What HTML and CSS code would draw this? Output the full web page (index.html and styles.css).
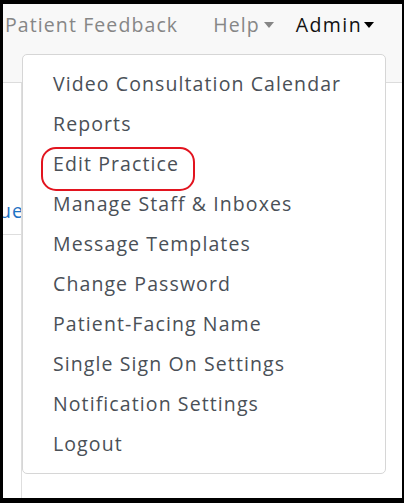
FILE: index.html
```html
<!doctype html>
<html>
<head>
<meta charset="utf-8">
<title>Admin menu</title>
<link rel="stylesheet" href="styles.css">
</head>
<body>
<div class="page">
    <div class="navbar">
        <a class="nav-link">Patient Feedback</a>
        <a class="nav-link toggle">Help</a>
        <a class="nav-link toggle active">Admin</a>
    </div>
    <div class="content">
        <div class="side">
            <div class="side-row"><span class="link">Queue</span></div>
        </div>
        <div class="main"></div>
    </div>

    <ul class="dropdown">
        <li>Video Consultation Calendar</li>
        <li>Reports</li>
        <li class="marked">Edit Practice</li>
        <li>Manage Staff &amp; Inboxes</li>
        <li>Message Templates</li>
        <li>Change Password</li>
        <li>Patient-Facing Name</li>
        <li>Single Sign On Settings</li>
        <li>Notification Settings</li>
        <li>Logout</li>
    </ul>
</div>
</body>
</html>
```

FILE: styles.css
```css
* { padding: 0; margin: 0; box-sizing: border-box; }
li { list-style: none; }
html, body { height: 100%; }
body { background: #000; padding: 4px 2px 5px 3px; font-family: "Open Sans", "Liberation Sans", sans-serif; letter-spacing: 1.1px; }

.page { position: relative; height: 100%; background: #fff; overflow: hidden; }

.navbar { height: 79px; background: #f8f8f8; border-bottom: 1px solid #dcdcdc; display: flex; justify-content: flex-end; align-items: flex-start; padding: 8px 28px 0 0; white-space: nowrap; }
.nav-link { font-size: 19.5px; line-height: 26px; color: #868686; margin-left: 35px; display: flex; align-items: center; }
.nav-link.active { color: #111; margin-left: 22px; letter-spacing: 1.4px; }
.toggle::after { content: ""; display: inline-block; margin-left: 4px; border-top: 6px solid currentColor; border-left: 5.5px solid transparent; border-right: 5.5px solid transparent; }
.toggle.active::after { border-top-color: #000; margin-left: 2px; }

.content { display: flex; height: 100%; }
.side { width: 19px; border-right: 1px solid #dedede; }
.side-row { height: 152px; border-bottom: 1px solid #dedede; display: flex; justify-content: flex-end; align-items: flex-end; padding-bottom: 12px; overflow: hidden; white-space: nowrap; }
.link { color: #1f73c4; font-size: 19.5px; line-height: 22px; margin-right: -3px; }
.main { flex: 1; }

.dropdown { position: absolute; left: 19px; top: 50px; width: 364px; background: #fff; border: 1px solid #d6d6d6; border-radius: 5px; padding: 9px 0; }
.dropdown li { height: 40px; line-height: 40px; padding-left: 30px; font-size: 19.5px; color: #4a5057; white-space: nowrap; }
.dropdown .marked { position: relative; }
.dropdown .marked::before { content: ""; position: absolute; left: 18px; top: 3px; width: 150px; height: 40px; border: 2.5px solid #e2141f; border-radius: 15px; }
```
